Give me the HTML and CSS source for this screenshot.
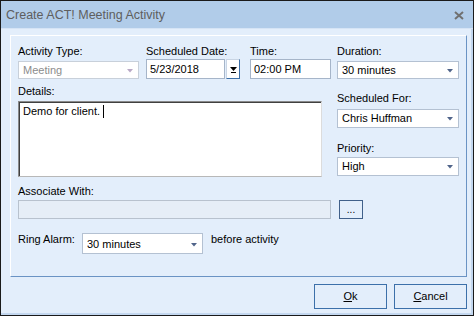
FILE: index.html
```html
<!DOCTYPE html>
<html>
<head>
<meta charset="utf-8">
<link rel="stylesheet" href="styles.css">
</head>
<body>
<div class="window">
  <div class="titlebar">
    <span class="title">Create ACT! Meeting Activity</span>
    <svg class="close" width="10" height="9" viewBox="0 0 10 9"><path d="M1 1 L9 8 M9 1 L1 8" stroke="#707070" stroke-width="2" fill="none"/></svg>
  </div>
  <div class="body">
    <div class="panel">
      <div class="top">
        <div class="left">
          <div class="fieldrow">
            <div class="field f-type">
              <div class="label">Activity Type:</div>
              <div class="combo disabled"><span class="val">Meeting</span><svg class="arrow" width="6" height="4" viewBox="0 0 6 4"><path d="M0 0 H6 L3 3.5 Z" fill="#b9a9c6"/></svg></div>
            </div>
            <div class="field f-date">
              <div class="label">Scheduled Date:</div>
              <div class="datebox">
                <div class="input date-input">5/23/2018</div>
                <div class="datebtn"><svg width="7" height="6" viewBox="0 0 7 6"><path d="M0 0 H7 L3.5 4 Z" fill="#000"/><rect x="1" y="5" width="5" height="1" fill="#000"/></svg></div>
              </div>
            </div>
            <div class="field f-time">
              <div class="label">Time:</div>
              <div class="input time-input">02:00 PM</div>
            </div>
          </div>
          <div class="label details-label">Details:</div>
          <div class="textarea">Demo for client. <span class="caret"></span></div>
        </div>
        <div class="right">
          <div class="label">Duration:</div>
          <div class="combo c-dur"><span class="val">30 minutes</span><svg class="arrow" width="6" height="4" viewBox="0 0 6 4"><path d="M0 0 H6 L3 3.5 Z" fill="#50648a"/></svg></div>
          <div class="label sched-label">Scheduled For:</div>
          <div class="combo c-sched"><span class="val">Chris Huffman</span><svg class="arrow" width="6" height="4" viewBox="0 0 6 4"><path d="M0 0 H6 L3 3.5 Z" fill="#50648a"/></svg></div>
          <div class="label prio-label">Priority:</div>
          <div class="combo c-prio"><span class="val">High</span><svg class="arrow" width="6" height="4" viewBox="0 0 6 4"><path d="M0 0 H6 L3 3.5 Z" fill="#50648a"/></svg></div>
        </div>
      </div>
      <div class="label assoc-label">Associate With:</div>
      <div class="assoc-row">
        <div class="assoc-input"></div>
        <div class="dots">...</div>
      </div>
      <div class="alarm-row">
        <div class="label">Ring Alarm:</div>
        <div class="combo c-alarm"><span class="val">30 minutes</span><svg class="arrow" width="6" height="4" viewBox="0 0 6 4"><path d="M0 0 H6 L3 3.5 Z" fill="#50648a"/></svg></div>
        <div class="label">before activity</div>
      </div>
    </div>
    <div class="buttons">
      <div class="btn"><span class="u">O</span>k</div>
      <div class="btn"><span class="u">C</span>ancel</div>
    </div>
  </div>
</div>
</body>
</html>
```

FILE: styles.css
```css
html, body {
  margin: 0;
  padding: 0;
  background: #e3eefb;
}
.window {
  width: 474px;
  height: 316px;
  box-sizing: border-box;
  border: 1px solid #1a1a1a;
  background: #e3eefb;
  font-family: "Liberation Sans", Arial, sans-serif;
  font-size: 11px;
  color: #000;
  display: flex;
  flex-direction: column;
  box-shadow: inset -2px -2px 0 #c3d7ef;
}
.titlebar {
  height: 27px;
  background: #b1cce9;
  display: flex;
  align-items: center;
  justify-content: space-between;
  padding: 0 9px 0 5px;
  border-bottom: 1px solid #d6e4f5;
}
.title {
  font-size: 12.5px;
  color: #5e5e5e;
  line-height: 14px;
  margin-top: 1px;
}
.close {
  display: block;
  margin-top: 1px;
}
.body {
  padding: 6px 0 0 9px;
  flex: 1;
}
.panel {
  width: 457px;
  height: 242px;
  box-sizing: border-box;
  border-top: 1px solid #ffffff;
  border-left: 1px solid #ffffff;
  border-right: 1px solid #6a93c4;
  border-bottom: 1px solid #6a93c4;
  padding: 9px 0 0 7px;
}
.label {
  line-height: 13px;
  height: 13px;
  white-space: nowrap;
}
.top {
  display: flex;
  gap: 6px;
  height: 136px;
}
.left {
  width: 313px;
  display: flex;
  flex-direction: column;
}
.fieldrow {
  display: flex;
  height: 34px;
}
.field {
  display: flex;
  flex-direction: column;
}
.f-type { width: 121px; margin-right: 7px; }
.f-date { width: 94px; margin-right: 10px; }
.f-time { width: 81px; }
.combo {
  box-sizing: border-box;
  height: 19px;
  background: #ffffff;
  border: 1px solid #b4c1d2;
  display: flex;
  align-items: center;
  justify-content: space-between;
  padding: 0 5px 0 4px;
  line-height: 13px;
}
.combo .arrow { display: block; margin-top: 1px; }
.f-type .combo { margin-top: 3px; height: 18px; }
.combo.disabled { border-color: #c8d0da; color: #8c8c8c; }
.datebox {
  display: flex;
  margin-top: 1px;
  height: 20px;
}
.input {
  box-sizing: border-box;
  height: 20px;
  background: #ffffff;
  border: 1px solid #a6b5c9;
  padding: 0 3px;
  line-height: 18px;
}
.date-input { width: 80px; }
.time-input { margin-top: 1px; width: 81px; }
.datebtn {
  box-sizing: border-box;
  width: 14px;
  height: 20px;
  margin-left: 1px;
  background: #ffffff;
  border: 1px solid #c9d5e4;
  border-right-color: #3b6fa8;
  border-bottom-color: #3b6fa8;
  display: flex;
  align-items: center;
  justify-content: center;
}
.datebtn svg { display: block; margin-top: 1px; }
.details-label { margin-top: 6px; }
.textarea {
  margin-top: 3px;
  width: 304px;
  height: 76px;
  box-sizing: border-box;
  background: #ffffff;
  border: 1px solid;
  border-color: #8a8a8a #dcdcdc #b8b8b8 #8a8a8a;
  box-shadow: inset 1px 1px 0 #404040;
  padding: 3px 4px;
  line-height: 13px;
}
.caret {
  display: inline-block;
  width: 1px;
  height: 13px;
  background: #000;
  vertical-align: top;
}
.right {
  width: 122px;
  display: flex;
  flex-direction: column;
}
.c-dur { margin-top: 3px; height: 18px; }
.sched-label { margin-top: 13px; }
.c-sched { margin-top: 4px; }
.prio-label { margin-top: 14px; }
.c-prio { margin-top: 2px; }
.assoc-label { margin-top: 4px; }
.assoc-row {
  display: flex;
  margin-top: 2px;
  height: 19px;
}
.assoc-input {
  box-sizing: border-box;
  width: 313px;
  height: 19px;
  background: #e6eef7;
  border: 1px solid #b8c2ce;
}
.dots {
  box-sizing: border-box;
  width: 24px;
  height: 19px;
  margin-left: 8px;
  border: 1px solid #40608a;
  text-align: center;
  line-height: 17px;
  font-size: 10px;
}
.alarm-row {
  display: flex;
  align-items: flex-start;
  margin-top: 14px;
}
.c-alarm {
  width: 121px;
  height: 21px;
  margin: 0 8px 0 0;
  padding-top: 2px;
}
.alarm-row .label:first-child { width: 64px; }
.buttons {
  display: flex;
  gap: 7px;
  justify-content: flex-end;
  width: 457px;
  margin-top: 7px;
}
.btn {
  box-sizing: border-box;
  width: 73px;
  height: 25px;
  border: 1px solid #3c70aa;
  text-align: center;
  line-height: 23px;
}
.u { text-decoration: underline; }
```
